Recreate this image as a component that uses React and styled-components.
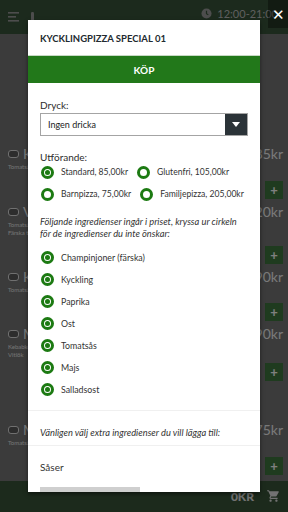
import React from "react";
import styled, { createGlobalStyle } from "styled-components";

const GlobalStyle = createGlobalStyle`
	html, body {
		margin: 0;
		padding: 0;
		width: 288px;
		height: 512px;
		overflow: hidden;
		font-family: Lato, "Open Sans", sans-serif;
	}
	* {
		box-sizing: border-box;
	}
`

const Page = styled.div`
	position: relative;
	width: 288px;
	height: 512px;
	background: #767676;
	display: flex;
	flex-direction: column;
	overflow: hidden;
`

const TopBar = styled.div`
	height: 37px;
	background: #38553a;
	display: flex;
	align-items: center;
	padding: 0 10px 0 8px;
	gap: 10px;
	color: #bdbdbd;
`

const OpenHours = styled.div`
	margin-left: auto;
	display: flex;
	align-items: center;
	gap: 5px;
	font-size: 11px;
	margin-top: -6px;
`

const MenuList = styled.div`
	flex: 1;
	padding: 0 5px 0 8px;
	display: flex;
	flex-direction: column;
	padding-top: 113px;
`

const Dish = styled.div`
	display: flex;
	flex-direction: column;
	margin-top: ${p => p.offset || 0}px;
	height: ${p => p.tall}px;
	color: #f2f2f2;
`

const DishHead = styled.div`
	display: flex;
	align-items: center;
	gap: 4px;
	font-size: 14px;
	height: 14px;
`

const Check = styled.span`
	width: 11px;
	height: 8px;
	border: 1.5px solid #e0e0e0;
	border-radius: 3px;
	background: #5a5a5a;
`

const Price = styled.span`
	margin-left: auto;
	font-size: 14px;
`

const DishDesc = styled.div`
	font-size: 6px;
	line-height: 8px;
	margin-top: 2px;
	color: #e6e6e6;
`

const DishActions = styled.div`
	display: flex;
	justify-content: flex-end;
	align-items: center;
	gap: 6px;
	margin-top: auto;
	margin-bottom: 6px;
`

const QtyBox = styled.span`
	width: 14px;
	height: 18px;
	border-right: 2px solid #111;
`

const PlusBtn = styled.span`
	width: 18px;
	height: 18px;
	background: #3e773e;
	color: #fff;
	display: flex;
	align-items: center;
	justify-content: center;
	font-size: 13px;
	font-weight: bold;
`

const Footer = styled.div`
	height: 34px;
	background: #385438;
	display: flex;
	align-items: center;
	justify-content: flex-end;
	gap: 12px;
	padding: 0 7px 0 0;
	color: #e4e4e4;
	font-weight: 900;
	font-size: 12px;
`

const Overlay = styled.div`
	position: absolute;
	inset: 0;
	background: rgba(0, 0, 0, 0.5);
`

const CloseBtn = styled.div`
	position: absolute;
	top: 0;
	right: 0;
	width: 20px;
	height: 28px;
	background: rgba(0, 0, 0, 0.35);
	color: #fff;
	display: flex;
	align-items: center;
	justify-content: center;
	font-size: 15px;
`

const Modal = styled.div`
	position: absolute;
	top: 20px;
	left: 28px;
	width: 232px;
	height: 472px;
	background: #fff;
	overflow: hidden;
	box-shadow: 0 2px 4px rgba(0, 0, 0, 0.5);
	display: flex;
	flex-direction: column;
	color: #333;
	& > * {
		flex-shrink: 0;
	}
`

const ModalTitle = styled.div`
	height: 35px;
	display: flex;
	align-items: center;
	padding: 1px 12px 0;
	font-weight: bold;
	font-size: 9.5px;
	color: #222a30;
`

const BuyButton = styled.div`
	height: 28px;
	background: #22781a;
	color: #fff;
	font-weight: bold;
	font-size: 10px;
	display: flex;
	align-items: center;
	justify-content: center;
	border-top: 1px solid #c7d9c4;
`

const Section = styled.div`
	padding: ${p => p.pad || "0 12px"};
	border-bottom: ${p => (p.line ? "1px solid #f0f0f0" : "none")};
`

const Label = styled.div`
	font-size: 10px;
	line-height: 14px;
	margin-top: ${p => p.top || 0}px;
	color: #2d2d2d;
`

const Select = styled.div`
	margin-top: 1px;
	height: 23px;
	border: 1px solid #a4a4a4;
	display: flex;
	align-items: stretch;
	font-size: 9px;
`

const SelectValue = styled.div`
	flex: 1;
	display: flex;
	align-items: center;
	padding-left: 7px;
	color: #222;
`

const SelectArrow = styled.div`
	width: 22px;
	background: #2b3338;
	display: flex;
	align-items: center;
	justify-content: center;
	&::after {
		content: "";
		border-left: 4px solid transparent;
		border-right: 4px solid transparent;
		border-top: 5px solid #fff;
	}
`

const OptionWrap = styled.div`
	display: flex;
	flex-wrap: wrap;
	column-gap: 8px;
	margin-top: -3px;
`

const Option = styled.div`
	display: flex;
	align-items: center;
	gap: 7px;
	height: 22px;
	font-size: ${p => p.size || 8.8}px;
	color: #333;
	padding-left: 1px;
`

const Radio = styled.span`
	width: 13px;
	height: 13px;
	border-radius: 50%;
	border: 3px solid #1c7a12;
	display: flex;
	align-items: center;
	justify-content: center;
	flex-shrink: 0;
	&::after {
		content: "";
		width: 5px;
		height: 5px;
		border-radius: 50%;
		background: ${p => (p.checked ? "#1c7a12" : "transparent")};
	}
`

const Note = styled.div`
	font-style: italic;
	font-size: 9.3px;
	line-height: 12px;
	margin-top: ${p => p.top || 0}px;
	color: #333;
	white-space: nowrap;
`

const Ingredients = styled.div`
	margin-top: 6px;
	padding-bottom: 10px;
	display: flex;
	flex-direction: column;
`

const Sauces = styled.div`
	font-size: 10px;
	line-height: 14px;
	padding-top: 14px;
	color: #333;
`

const Bar = styled.div`
	margin-top: 13px;
	width: 100px;
	height: 6px;
	background: #cfcfcf;
`

const dishes = [
	{ name: "Kycklingpizza Special", desc: ["Tomatsås, ost, kyckling"], price: "85kr", tall: 58, offset: 0 },
	{ name: "Vegetariana", desc: ["Tomatsås, ost, champinjoner", "Färska tomater"], price: "120kr", tall: 65, offset: 0 },
	{ name: "Kebabpizza", desc: ["Tomatsås, ost, kebab"], price: "90kr", tall: 57, offset: 0 },
	{ name: "Mexicana", desc: ["Kebabkött, jalapeños", "Vitlök"], price: "90kr", tall: 60, offset: 0 },
	{ name: "Margherita", desc: ["Tomatsås, ost"], price: "75kr", tall: 58, offset: 36 },
];

const sizes = [
	{ label: "Standard, 85,00kr", checked: true },
	{ label: "Glutenfri, 105,00kr" },
	{ label: "Barnpizza, 75,00kr" },
	{ label: "Familjepizza, 205,00kr" },
];

const ingredients = ["Champinjoner (färska)", "Kyckling", "Paprika", "Ost", "Tomatsås", "Majs", "Salladsost"];

const Hamburger = () => (
	<svg width="12" height="10" viewBox="0 0 12 10">
		<rect x="0" y="0" width="11" height="1.6" fill="#9a9a9a" />
		<rect x="0" y="4" width="8" height="1.6" fill="#9a9a9a" />
		<rect x="0" y="8" width="11" height="1.6" fill="#9a9a9a" />
	</svg>
);

const Clock = () => (
	<svg width="11" height="11" viewBox="0 0 12 12">
		<circle cx="6" cy="6" r="5.5" fill="#9a9a9a" />
		<path d="M6 3v3.2l2 1.3" stroke="#38553a" strokeWidth="1.3" fill="none" />
	</svg>
);

const Cart = () => (
	<svg width="15" height="14" viewBox="0 0 24 24">
		<path fill="#e4e4e4" d="M7 18c-1.1 0-2 .9-2 2s.9 2 2 2 2-.9 2-2-.9-2-2-2zM1 2v2h2l3.6 7.59-1.35 2.45c-.16.28-.25.61-.25.96 0 1.1.9 2 2 2h12v-2H7.42c-.14 0-.25-.11-.25-.25l.03-.12.9-1.630h7.45c.75 0 1.41-.41 1.75-1.03l3.58-6.49A1 1 0 0 0 20 4H5.21l-.94-2H1zm16 16c-1.1 0-2 .9-2 2s.9 2 2 2 2-.9 2-2-.9-2-2-2z" />
	</svg>
);

function App() {
	return (
		<>
			<GlobalStyle />
			<Page>
				<TopBar>
					<Hamburger />
					<svg width="5" height="9" viewBox="0 0 5 9">
						<rect x="1" y="0" width="3" height="9" rx="1.2" fill="#9a9a9a" />
					</svg>
					<OpenHours>
						<Clock />
						<span>12:00-21:00</span>
					</OpenHours>
				</TopBar>
				<MenuList>
					{dishes.map(d => (
						<Dish key={d.name} tall={d.tall} offset={d.offset}>
							<DishHead>
								<Check />
								<span>{d.name}</span>
								<Price>{d.price}</Price>
							</DishHead>
							<DishDesc>
								{d.desc.map(line => (
									<div key={line}>{line}</div>
								))}
							</DishDesc>
							<DishActions>
								<QtyBox />
								<PlusBtn>+</PlusBtn>
							</DishActions>
						</Dish>
					))}
				</MenuList>
				<Footer>
					<span>0KR</span>
					<Cart />
				</Footer>
				<Overlay />
				<CloseBtn>✕</CloseBtn>
				<Modal>
					<ModalTitle>KYCKLINGPIZZA SPECIAL 01</ModalTitle>
					<BuyButton>KÖP</BuyButton>
					<Section line>
						<Label top={15}>Dryck:</Label>
						<Select>
							<SelectValue>Ingen dricka</SelectValue>
							<SelectArrow />
						</Select>
						<Label top={14}>Utförande:</Label>
						<OptionWrap>
							{sizes.map(s => (
								<Option key={s.label} size={8.6}>
									<Radio checked={s.checked} />
									{s.label}
								</Option>
							))}
						</OptionWrap>
						<Note top={11}>
							Följande ingredienser ingår i priset, kryssa ur cirkeln
							<br />
							för de ingredienser du inte önskar:
						</Note>
						<Ingredients>
							{ingredients.map(i => (
								<Option key={i}>
									<Radio checked />
									{i}
								</Option>
							))}
						</Ingredients>
					</Section>
					<Section line pad="16px 12px 6px">
						<Note>Vänligen välj extra ingredienser du vill lägga till:</Note>
					</Section>
					<Section>
						<Sauces>Såser</Sauces>
						<Bar />
					</Section>
				</Modal>
			</Page>
		</>
	);
}

export default App;
